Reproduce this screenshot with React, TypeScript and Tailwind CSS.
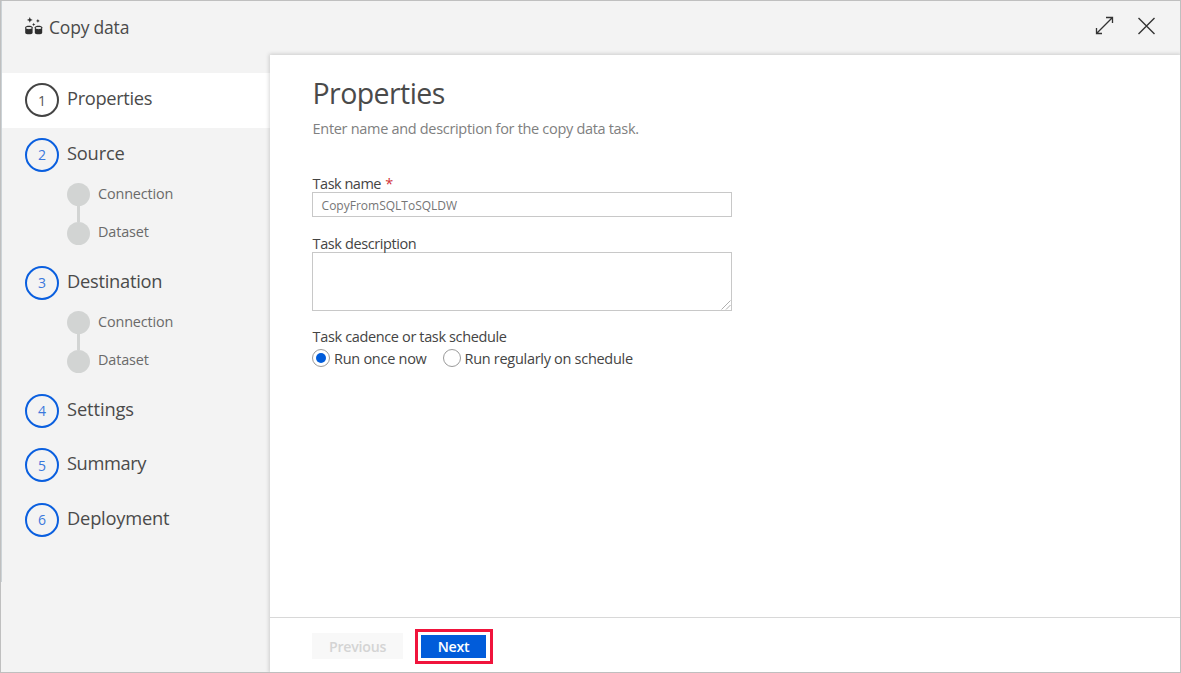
function CopyDataIcon() {
  return (
    <svg width="18" height="18" viewBox="0 0 18 18" fill="#2e2e2e">
      <path d="M4.8 0 5.6 2.1 7.7 2.9 5.6 3.7 4.8 5.8 4 3.7 1.9 2.9 4 2.1Z" />
      <path d="M12.9 2 13.5 3.3 14.8 3.9 13.5 4.5 12.9 5.8 12.3 4.5 11 3.9 12.3 3.3Z" />
      <path d="M8.7 5.8 9.2 7 10.4 7.5 9.2 8 8.7 9.2 8.2 8 7 7.5 8.2 7Z" />
      <path d="M.2 10.3C.2 8.2 7.6 8.2 7.6 10.3V15.8C7.6 17.8.2 17.8.2 15.8Z" />
      <path d="M9.8 10.3C9.8 8.2 17.2 8.2 17.2 10.3V15.8C17.2 17.8 9.8 17.8 9.8 15.8Z" />
      <path d="M1.2 10.4C1.8 9.8 6 9.8 6.6 10.4V11.6C5.6 12.3 2.2 12.3 1.2 11.6Z" fill="#e4e4e4" />
      <path d="M10.8 10.4C11.4 9.8 15.6 9.8 16.2 10.4V11.6C15.2 12.3 11.8 12.3 10.8 11.6Z" fill="#e4e4e4" />
    </svg>
  );
}

function SubSteps() {
  return (
    <div className="flex h-[73.5px] pl-[66px]">
      <div className="flex w-[23px] flex-col items-center pt-px">
        <span className="size-[23px] shrink-0 rounded-full bg-[#d2d4d3]" />
        <span className="h-[16px] w-[3px] bg-[#d2d4d3]" />
        <span className="size-[23px] shrink-0 rounded-full bg-[#d2d4d3]" />
      </div>
      <div className="flex flex-col pl-[8px] text-[14.4px] leading-[39px] tracking-[-0.13px] text-[#6a6a6a]">
        <span className="-mt-[8px] h-[38px]">Connection</span>
        <span>Dataset</span>
      </div>
    </div>
  );
}

function Step({ n, label, tracking, active = false }: { n: number; label: string; tracking: string; active?: boolean }) {
  return (
    <div className={`flex h-[54.5px] items-center pl-[24px] ${active ? "bg-white" : ""}`}>
      <span
        className={`-mt-[0.5px] flex size-[34px] items-center justify-center rounded-full border-2 text-[14px] ${
          active ? "border-[#444] text-[#555]" : "border-[#0a5fdf] text-[#3b78dc]"
        }`}
      >
        {n}
      </span>
      <span className={`-mt-[5px] ml-[8px] text-[18.3px] text-[#4a4a4a] ${tracking}`}>{label}</span>
    </div>
  );
}

export default function App() {
  return (
    <div className="flex h-[673px] w-[1181px] flex-col overflow-hidden border border-[#bfbfbf] bg-[#f3f3f3] font-['Open_Sans','Noto_Sans',sans-serif] text-[#444]">
      <header className="flex h-[53px] shrink-0 items-start border-l border-[#ccd3d7] pl-[23px] text-[#4a4a4a]">
        <div className="pt-[16px]">
          <CopyDataIcon />
        </div>
        <span className="ml-[6px] pt-[13px] text-[17.5px] leading-[26px] tracking-[-0.2px]">Copy data</span>
        <svg className="ml-auto mr-[23px] mt-[15px]" width="19" height="19" viewBox="0 0 19 19" fill="none" stroke="#333" strokeWidth="1.3">
          <path d="M1.5 17.5 17.5 1.5M11 1.5H17.5V7M1.5 12V17.5H7" />
        </svg>
        <svg className="mr-[24px] mt-[16px]" width="19" height="18" viewBox="0 0 19 18" fill="none" stroke="#333" strokeWidth="1.4">
          <path d="M1.5 1 17.5 17M17.5 1 1.5 17" />
        </svg>
      </header>
      <div className="flex flex-1">
        <div className="h-[528px] w-px shrink-0 bg-[#ccd3d7]" />
        <nav className="-ml-px w-[269px] pl-px pt-[19px]">
          <div className="-ml-px">
            <div className="pl-px [&>div]:-ml-px [&>div]:border-l [&>div]:border-transparent [&>div]:bg-clip-padding [&>div]:pl-[23px]">
              <Step n={1} label="Properties" tracking="tracking-[-0.35px]" active />
              <Step n={2} label="Source" tracking="tracking-[-0.2px]" />
            </div>
            <SubSteps />
            <Step n={3} label="Destination" tracking="tracking-[-0.25px]" />
            <SubSteps />
            <Step n={4} label="Settings" tracking="tracking-[-0.1px]" />
            <Step n={5} label="Summary" tracking="tracking-[-0.4px]" />
            <Step n={6} label="Deployment" tracking="tracking-[-0.2px]" />
          </div>
        </nav>
        <main className="mt-px flex flex-1 flex-col bg-white text-[14.5px] leading-[20px] shadow-[0_0_4px_1px_rgba(0,0,0,0.16)]">
          <div className="flex-1 pl-[42px] pt-[18px]">
            <h1 className="pl-[0.5px] text-[28.5px] leading-[40px] tracking-[-0.57px] text-[#4a4a4a]">Properties</h1>
            <p className="mt-[5.5px] pl-[0.6px] tracking-[-0.31px] text-[#808080]">Enter name and description for the copy data task.</p>
            <label className="mt-[35px] block pl-[0.6px] tracking-[-0.5px]">
              Task name <span className="ml-[1px] text-[#d13438]">*</span>
            </label>
            <div className="-mt-[1.5px] h-[25px] w-[420px] border border-[#c8c8c8] pl-[8.6px] text-[12px] leading-[25px] text-[#767676]">
              CopyFromSQLToSQLDW
            </div>
            <label className="mt-[16.5px] block pl-[0.6px] tracking-[-0.4px]">Task description</label>
            <div className="-mt-[1.5px] flex h-[59px] w-[420px] items-end justify-end border border-[#c8c8c8]">
              <svg width="10" height="10" viewBox="0 0 10 10" stroke="#9a9a9a" strokeWidth="0.8">
                <path d="M0.5 9.5 9.5 0.5M5 9.5 9.5 5" />
              </svg>
            </div>
            <p className="mt-[16px] pl-[0.6px] tracking-[-0.36px]">Task cadence or task schedule</p>
            <div className="mt-[1.5px] flex">
              <span className="flex size-[18px] items-center justify-center rounded-full border border-[#9a9a9a]">
                <span className="size-[10px] rounded-full bg-[#015cda]" />
              </span>
              <span className="ml-[4px] w-[109px] tracking-[-0.27px]">Run once now</span>
              <span className="size-[18px] rounded-full border border-[#9a9a9a]" />
              <span className="ml-[3.5px] tracking-[-0.29px]">Run regularly on schedule</span>
            </div>
          </div>
          <footer className="flex h-[55px] border-t border-[#d8d8d8] pl-[42px] pt-[11px] text-[14.2px] font-semibold tracking-[-0.25px]">
            <div className="mt-[4px] h-[26px] w-[91px] bg-[#f8f8f8] text-center leading-[27px] text-[#d4d4d4]">Previous</div>
            <div className="ml-[12px] h-[35px] w-[78px] border-[3px] border-[#f0143c] p-[3px]">
              <div className="h-[23px] w-[65px] bg-[#015cda] text-center leading-[23px] text-white">Next</div>
            </div>
          </footer>
        </main>
      </div>
    </div>
  );
}
